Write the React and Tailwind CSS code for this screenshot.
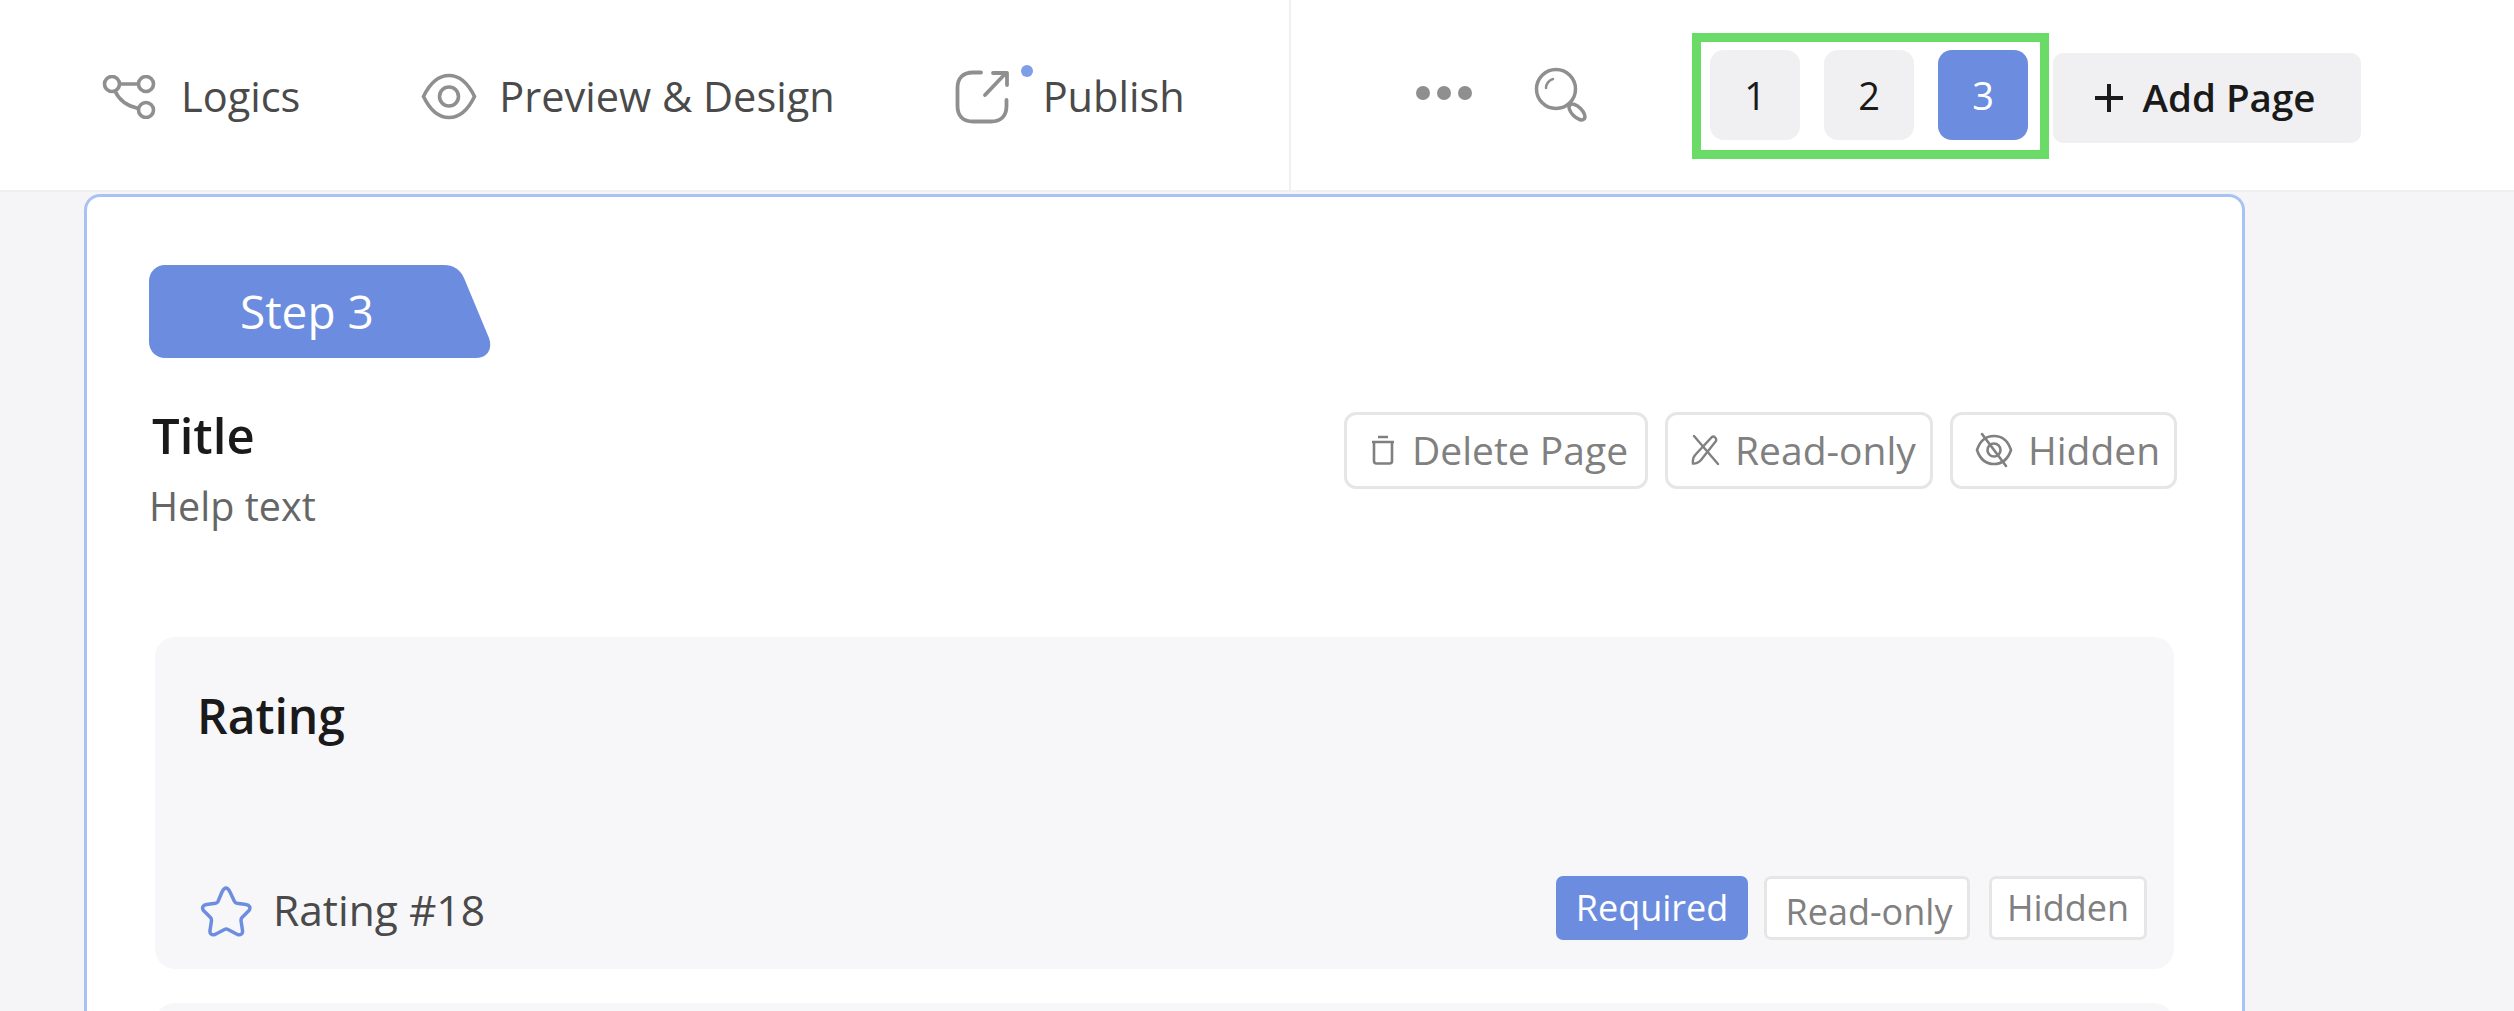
const sans = { fontFamily: '"Open Sans", "Noto Sans", sans-serif' };

function LogicsIcon() {
  return (
    <svg width="54" height="44" viewBox="0 0 54 44" fill="none" stroke="#8f8f8f" strokeWidth="3.6">
      <circle cx="10" cy="9" r="7.500" />
      <circle cx="44" cy="9" r="7.500" />
      <circle cx="44" cy="35" r="7.500" />
      <path d="M17.500 9H36.500M13 16C17 25 25 31 36.500 33.500" />
    </svg>
  );
}

function EyeIcon() {
  return (
    <svg width="56" height="47" viewBox="0 0 56 47" fill="none" stroke="#8f8f8f" strokeWidth="3.6">
      <path d="M2.500 23.500C9 10 18 2.500 28 2.500s19 7.500 25.500 21C47 37 38 44.500 28 44.500S9 37 2.500 23.500Z" />
      <circle cx="28" cy="23.500" r="9.500" />
    </svg>
  );
}

function PublishIcon() {
  return (
    <svg width="54" height="54" viewBox="0 0 54 54" fill="none" stroke="#8f8f8f" strokeWidth="3.8" strokeLinecap="round" strokeLinejoin="round">
      <path d="M26 2.500H18C8 2.500 2.500 8 2.500 18v18c0 10 5.500 15.500 15.500 15.500h18c10 0 15.500-5.500 15.500-15.500V30" />
      <path d="M30 25L50 4M38 3H52V15" />
    </svg>
  );
}

function SearchIcon() {
  return (
    <svg width="58" height="56" viewBox="0 0 58 56" fill="none" stroke="#8f8f8f" strokeWidth="3.500" strokeLinecap="round">
      <circle cx="23" cy="22" r="19.500" />
      <path d="M13 21c0-4 3-8 7-9" strokeWidth="2.500" />
      <ellipse cx="44" cy="45" rx="5" ry="10" transform="rotate(-45 44 45)" />
    </svg>
  );
}

function TrashIcon() {
  return (
    <svg width="24" height="30" viewBox="0 0 24 30" fill="none" stroke="#808080" strokeWidth="2.600">
      <path d="M7 2h10M1 7h22M3 7v19c0 1.500 1 2.500 2.500 2.500h13c1.500 0 2.500-1 2.500-2.500V7" />
    </svg>
  );
}

function PenOffIcon() {
  return (
    <svg width="30" height="32" viewBox="0 0 30 32" fill="none" stroke="#808080" strokeWidth="2.400" strokeLinecap="round">
      <path d="M3 2L27 30" />
      <path d="M21 3c2-1.500 5 1.500 4 4L10 26c-2 2.500-6 4-8 3.500-.5-3 .5-7 3-9.500L21 3Z" />
    </svg>
  );
}

function EyeOffIcon() {
  return (
    <svg width="40" height="36" viewBox="0 0 40 36" fill="none" stroke="#808080" strokeWidth="2.600" strokeLinecap="round">
      <path d="M3 18C6 9 12 4 20 4s14 5 17 14c-3 9-9 14-17 14S6 27 3 18Z" />
      <circle cx="20" cy="18" r="6.500" />
      <path d="M8 2L32 34" />
    </svg>
  );
}

function StarIcon() {
  return (
    <svg width="54" height="52" viewBox="0 0 54 52" fill="none" stroke="#6d8ee0" strokeWidth="3.500" strokeLinejoin="round">
      <path d="M27 3c2 0 3 2 4 4l4.500 9.500c.5 1 1.500 1.500 2.500 1.700l9 1.300c3.500.5 5 3 3 6l-7 7c-1 1-1 2-1 3l1.500 10c.5 3.500-2 5-5 4l-9.500-5c-1-.5-2.500-.5-3.500 0l-9.500 5c-3 1-5.500-.5-5-4l1.500-10c0-1 0-2-1-3l-7-7c-2-3-.5-5.500 3-6l9-1.300c1 -.2 2-.7 2.500-1.700L23 7c1-2 2-4 4-4Z" />
    </svg>
  );
}

function NavItem({ icon, label, className }) {
  return (
    <div className={`flex items-center text-[41.5px] leading-none text-[#4a4a4a] ${className}`}>
      {icon}
      <span>{label}</span>
    </div>
  );
}

function PageButton({ n, active }) {
  return (
    <button
      className={`flex h-[90px] w-[90px] items-center justify-center rounded-[14px] text-[38px] font-medium ${
        active ? 'bg-[#6c8ddf] text-white' : 'bg-[#f0f0f2] text-[#1a1a1a]'
      }`}
    >
      {n}
    </button>
  );
}

function OutlineButton({ icon, label, className }) {
  return (
    <div
      className={`flex h-[77px] items-center rounded-[12px] border-[3px] border-[#e6e6e6] bg-white pb-[2px] text-[39px] leading-none text-[#808080] ${className}`}
    >
      {icon}
      <span>{label}</span>
    </div>
  );
}

function Tag({ label, className }) {
  return (
    <div className={`flex h-[64px] items-center justify-center rounded-[7px] text-[36px] leading-none ${className}`}>
      {label}
    </div>
  );
}

export default function App() {
  return (
    <div style={sans} className="flex h-[1011px] w-[2514px] flex-col overflow-hidden bg-[#f5f5f7]">
      <header className="flex h-[192px] shrink-0 border-b-2 border-[#f0f0f2] bg-white">
        <div className="flex w-[1291px] items-center border-r-2 border-[#f0f0f2] pl-[102px] pt-[3px]">
          <NavItem icon={<LogicsIcon />} label="Logics" className="gap-[25px]" />
          <NavItem icon={<EyeIcon />} label="Preview & Design" className="ml-[121px] gap-[22px]" />
          <div className="relative ml-[120px] flex items-center gap-[34px] text-[41.5px] leading-none text-[#4a4a4a]">
            <PublishIcon />
            <span>Publish</span>
            <span className="absolute left-[66px] top-[-5px] h-[12px] w-[12px] rounded-full bg-[#7e9ee8]" />
          </div>
        </div>
        <div className="flex items-center pl-[125px]">
          <div className="mb-[4px] flex gap-[7px]">
            <span className="h-[14px] w-[14px] rounded-full bg-[#8f8f8f]" />
            <span className="h-[14px] w-[14px] rounded-full bg-[#8f8f8f]" />
            <span className="h-[14px] w-[14px] rounded-full bg-[#8f8f8f]" />
          </div>
          <div className="ml-[61px]">
            <SearchIcon />
          </div>
          <div className="ml-[101px] mt-[2px] flex h-[126px] w-[357px] items-center gap-[24px] border-[9px] border-[#69db66] pb-[2px] pl-[9px]">
            <PageButton n="1" />
            <PageButton n="2" />
            <PageButton n="3" active />
          </div>
          <button className="ml-[4px] mt-[5px] flex h-[90px] w-[308px] items-center justify-center gap-[20px] rounded-[10px] bg-[#f0f0f2] pr-[4px] text-[38.5px] font-semibold text-[#1a1a1a]">
            <svg width="28" height="28" viewBox="0 0 28 28" stroke="#1a1a1a" strokeWidth="4">
              <path d="M14 0V28M0 14H28" />
            </svg>
            Add Page
          </button>
        </div>
      </header>

      <main className="ml-[84px] mt-[2px] flex w-[2161px] flex-1 flex-col rounded-t-[16px] border-[3px] border-b-0 border-[#a8c3f1] bg-white pl-[62px] pr-[65px] pt-[68px]">
        <div className="relative flex h-[93px] w-[342px] items-center pb-[2px] pl-[91px] text-[46px] font-medium leading-none text-white">
          <svg className="absolute left-0 top-0" width="342" height="93" viewBox="0 0 342 93" fill="#6c8ddf">
            <path d="M16 0H295c9 0 16 4 20 13l25 60c4 11-2 20-13 20H16C7 93 0 86 0 77V16C0 7 7 0 16 0Z" />
          </svg>
          <span className="relative">Step 3</span>
        </div>

        <div className="mt-[53px] flex items-start justify-between">
          <div className="pl-[3px]">
            <div className="text-[49px] font-semibold leading-none text-[#1a1a1a]">Title</div>
            <div className="-ml-[3px] mt-[27px] text-[39.5px] leading-none text-[#666666]">Help text</div>
          </div>
          <div className="flex gap-[17px] pt-[1px]">
            <OutlineButton icon={<TrashIcon />} label="Delete Page" className="w-[304px] gap-[17px] pl-[24px]" />
            <OutlineButton icon={<PenOffIcon />} label="Read-only" className="w-[268px] gap-[14px] pl-[23px]" />
            <OutlineButton icon={<EyeOffIcon />} label="Hidden" className="w-[227px] gap-[14px] pl-[21px]" />
          </div>
        </div>

        <section className="ml-[6px] mr-[3px] mt-[110px] flex h-[332px] shrink-0 flex-col justify-between rounded-[20px] bg-[#f7f7f9] pb-[29px] pl-[42px] pr-[27px] pt-[55px]">
          <div className="text-[48px] font-semibold leading-none text-[#1a1a1a]">Rating</div>
          <div className="flex items-center justify-between">
            <div className="ml-[2px] flex items-center gap-[20px] pt-[6px] text-[42.5px] leading-none text-[#4a4a4a]">
              <StarIcon />
              <span>Rating #18</span>
            </div>
            <div className="flex gap-[16px]">
              <Tag label="Required" className="w-[192px] bg-[#6c8ddf] text-white" />
              <Tag label="Read-only" className="w-[206px] border-[3px] border-[#e6e6e6] bg-white pl-[4px] pt-[8px] text-[#808080]" />
              <Tag label="Hidden" className="ml-[3px] w-[158px] border-[3px] border-[#e6e6e6] bg-white text-[#808080]" />
            </div>
          </div>
        </section>

        <section className="ml-[6px] mr-[3px] mt-[34px] h-[200px] shrink-0 rounded-[20px] bg-[#f7f7f9]" />
      </main>
    </div>
  );
}
